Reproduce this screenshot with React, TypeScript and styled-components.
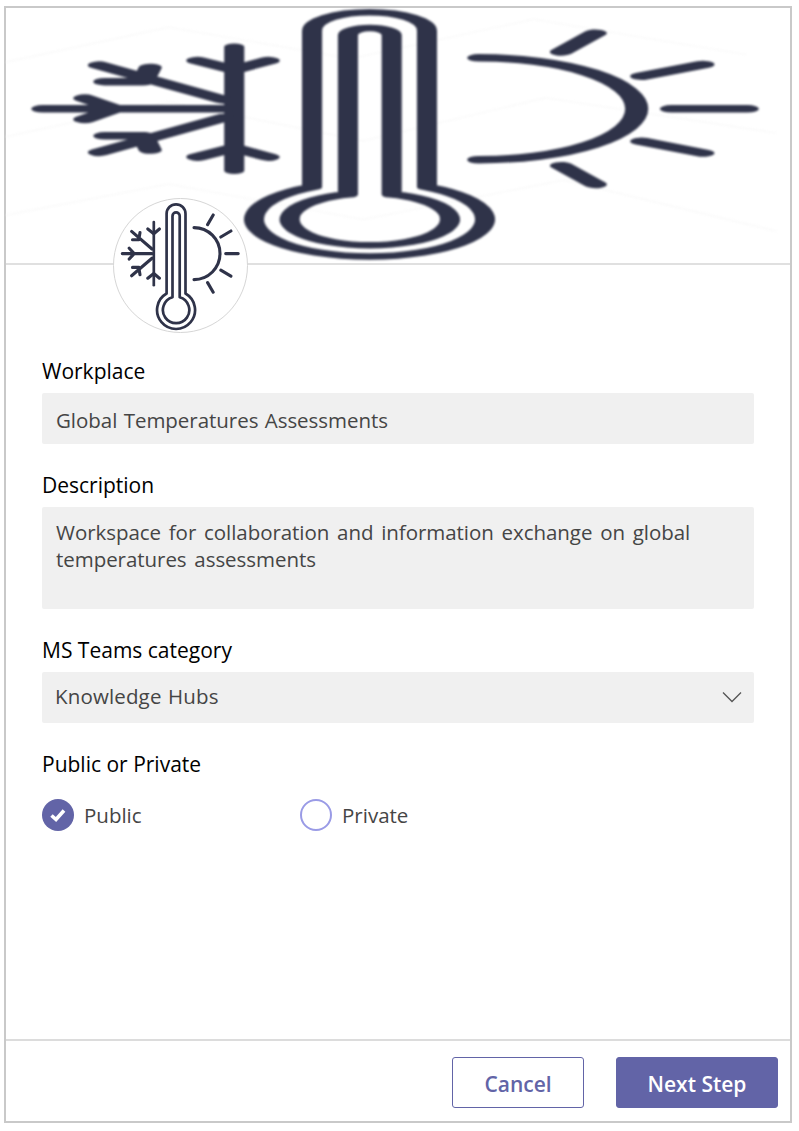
import styled, { createGlobalStyle } from "styled-components";

const GlobalStyle = createGlobalStyle`
  body {
    margin: 0;
    background: #fff;
    font-family: "Open Sans", "Noto Sans", "Liberation Sans", sans-serif;
  }
`;

function ThermometerArt({ stroke }: { stroke: number }) {
  return (
    <g fill="none" stroke="#2f3349" strokeWidth={stroke} strokeLinecap="round" strokeLinejoin="round">
      <path d="M53.6 95.5V15.75A9.45 9.45 0 0 1 72.5 15.75V95.5A19 19 0 1 1 53.6 95.5Z" />
      <path d="M59.5 99.3V18A3.6 3.6 0 0 1 66.7 18V99.3A13.2 13.2 0 1 1 59.5 99.3Z" />
      <path d="M40.8 24V87.2" />
      <g strokeWidth={stroke * 1.15}>
        <path d="M34.8 31L40.8 35.7L46.4 31M34.8 80.2L40.8 75.5L46.4 80.2" />
        <path d="M9.3 55.6H39M16.2 50.2L21.2 55.6L16.2 61" />
        <path d="M39 51L18.6 33.4M25.8 41.8H19.5M25.8 41.8L27 34.5" />
        <path d="M39 60.2L18.6 77.8M25.8 69.4H19.5M25.8 69.4L27 76.7" />
        <path d="M81 29.6A26 26 0 0 1 81 81.6" />
        <path d="M112.7 55.6H125.2M107.8 39L117.9 33M107.8 72.2L117.9 78.2" />
        <path d="M94.6 26.6L100.2 17M94.6 84.6L100.2 94.2" />
      </g>
    </g>
  );
}

export default function App() {
  return (
    <>
      <GlobalStyle />
      <Page>
        <Frame>
          <Banner>
            <BannerArt viewBox="3.26 4.18 128.95 130.1" preserveAspectRatio="none">
              <g fill="none" stroke="#f8f8f8" strokeWidth="0.5">
                <path d="M3 32L30 14L60 30L90 10L125 28M3 70L30 52L62 72L92 50L130 68M3 110L30 94L62 112L95 92L130 118" />
              </g>
              <ThermometerArt stroke={3.3} />
            </BannerArt>
            <Avatar>
              <AvatarArt viewBox="1 1 133 133">
                <ThermometerArt stroke={2.7} />
              </AvatarArt>
            </Avatar>
          </Banner>

          <Form>
            <Field $height={51}>
              <Label>Workplace</Label>
              <Value>Global Temperatures Assessments</Value>
            </Field>
            <Field $height={102}>
              <Label>Description</Label>
              <Description>
                Workspace for collaboration and information exchange on global temperatures assessments
              </Description>
            </Field>
            <Field $height={51}>
              <Label>MS Teams category</Label>
              <Select>
                Knowledge Hubs
                <svg width="20" height="12" viewBox="0 0 20 12" fill="none" stroke="#555" strokeWidth="1.3">
                  <path d="M1 1.5L10 10.5L19 1.5" />
                </svg>
              </Select>
            </Field>
            <div>
              <Label>Public or Private</Label>
              <RadioRow>
                <Radio>
                  <Checked>
                    <svg width="20" height="20" viewBox="0 0 20 20" fill="none" stroke="#fff" strokeWidth="3.6">
                      <path d="M3.5 10.5L8 14.5L16 5.5" />
                    </svg>
                  </Checked>
                  Public
                </Radio>
                <Radio>
                  <Unchecked />
                  Private
                </Radio>
              </RadioRow>
            </div>
          </Form>

          <Footer>
            <CancelButton>Cancel</CancelButton>
            <NextButton>Next Step</NextButton>
          </Footer>
        </Frame>
      </Page>
    </>
  );
}

const Page = styled.div`
  padding: 6px 0 0 4px;
`;

const Frame = styled.div`
  box-sizing: border-box;
  width: 788px;
  height: 1117px;
  border: 2px solid #c9c9c9;
  background: #fff;
  display: flex;
  flex-direction: column;
`;

const Banner = styled.div`
  position: relative;
  height: 255px;
  flex: none;
  border-bottom: 2px solid #e0e0e0;
`;

const BannerArt = styled.svg`
  display: block;
  width: 100%;
  height: 100%;
  filter: blur(0.8px);
`;

const Avatar = styled.div`
  position: absolute;
  left: 107px;
  top: 190px;
  box-sizing: border-box;
  width: 135px;
  height: 135px;
  border: 1px solid #d6d6d6;
  border-radius: 50%;
  background: #fff;
`;

const AvatarArt = styled.svg`
  display: block;
  width: 133px;
  height: 133px;
  filter: blur(0.3px);
`;

const Form = styled.div`
  flex: 1;
  padding: 91px 36px 0;
  display: flex;
  flex-direction: column;
  gap: 26px;
`;

const Field = styled.div<{ $height: number }>`
  display: flex;
  flex-direction: column;

  & > :last-child {
    height: ${p => p.$height}px;
  }
`;

const Label = styled.div`
  font-size: 21px;
  line-height: 30px;
  font-weight: 500;
  color: #000;
  margin-bottom: 7px;
`;

const Value = styled.div`
  box-sizing: border-box;
  background: #f0f0f0;
  border-radius: 2px;
  padding: 14px 14px 0;
  font-size: 20.5px;
  line-height: 27px;
  color: #454545;
  letter-spacing: -0.03px;
  word-spacing: 1px;
`;

const Description = styled(Value)`
  padding-top: 12px;
  letter-spacing: -0.05px;
  word-spacing: 2.5px;
`;

const Select = styled(Value)`
  display: flex;
  align-items: center;
  justify-content: space-between;
  padding: 0 12px 2px 13px;
  letter-spacing: 0.15px;
`;

const RadioRow = styled.div`
  display: flex;
  margin-top: 20px;
`;

const Radio = styled.div`
  width: 258px;
  display: flex;
  align-items: center;
  gap: 10px;
  font-size: 20.5px;
  color: #454545;
`;

const Checked = styled.span`
  box-sizing: border-box;
  width: 32px;
  height: 32px;
  border-radius: 50%;
  background: #6264a7;
  display: flex;
  align-items: center;
  justify-content: center;
`;

const Unchecked = styled.span`
  box-sizing: border-box;
  width: 32px;
  height: 32px;
  border-radius: 50%;
  border: 2px solid #9a9be6;
`;

const Footer = styled.div`
  flex: none;
  height: 82px;
  box-sizing: border-box;
  border-top: 2px solid #dcdcdc;
  padding: 16px 12px 0 0;
  display: flex;
  justify-content: flex-end;
  gap: 32px;
`;

const CancelButton = styled.div`
  box-sizing: border-box;
  width: 132px;
  height: 51px;
  padding-top: 2px;
  border: 1px solid #6264a7;
  border-radius: 3px;
  color: #6264a7;
  font-size: 21px;
  font-weight: 600;
  display: flex;
  align-items: center;
  justify-content: center;
`;

const NextButton = styled(CancelButton)`
  width: 162px;
  background: #6264a7;
  color: #fff;
`;
